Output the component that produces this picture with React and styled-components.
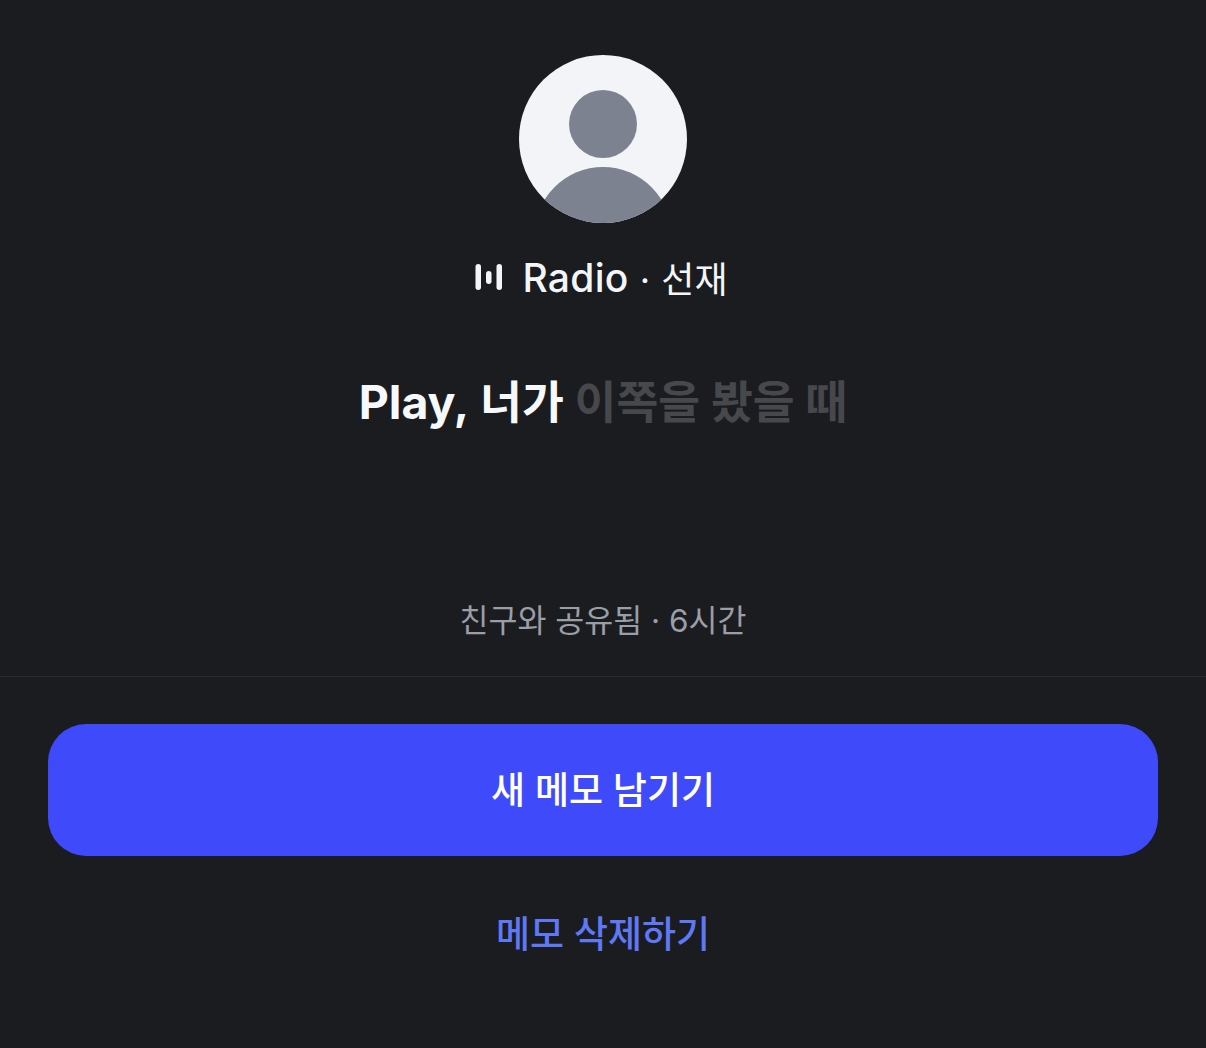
import React from 'react';
import styled, { createGlobalStyle } from 'styled-components';

const Global = createGlobalStyle`
  html, body { margin: 0; padding: 0; background: #1a1c20; }
  body { font-family: Inter, "Noto Sans CJK KR", sans-serif; }
`;
const Page = styled.div`
  width: 1206px; height: 1048px; overflow: hidden; background: #1a1c20;
  display: flex; flex-direction: column; align-items: center;
`;
const Top = styled.div`
  display: flex; flex: none; flex-direction: column; align-items: center; padding-top: 55px; height: 677px; box-sizing: border-box; width: 100%;
  border-bottom: 1px solid #2a2c30;
`;
const Avatar = styled.svg`width: 168px; height: 168px; display: block; flex: none;`;
const Source = styled.div`
  display: flex; flex: none; align-items: center; margin: 31px 3px 0 0; height: 46px; color: #f4f5f7;
  font-size: 36px; font-weight: 400; white-space: pre; word-spacing: 1px;
`;
const Latin = styled.span`font-size: ${p => p.$size}px; font-weight: ${p => p.$weight}; letter-spacing: ${p => p.$spacing || 0}px;`;
const Bars = styled.svg`width: 27px; height: 28px; margin-right: 20px; flex: none;`;
const Title = styled.div`
  flex: none; margin-top: 72px; height: 60px; line-height: 60px; font-size: 45.5px; font-weight: 700; color: #f7f8fa; white-space: nowrap;
`;
const Faded = styled.span`color: #46484c;`;
const Meta = styled.div`
  flex: none; margin-top: 168px; font-size: 31.5px; line-height: 42px; color: #9a9ea6; white-space: nowrap;
`;
const Actions = styled.div`
  display: flex; flex-direction: column; align-items: center; width: 100%; padding-top: 47px;
`;
const Primary = styled.button`
  width: 1110px; height: 132px; border: 0; border-radius: 38px; background: #3f4bfb; color: #fff; padding: 0 0 4px;
  font: 500 37px Inter, "Noto Sans CJK KR", sans-serif;
`;
const Secondary = styled.button`
  margin-top: 46px; height: 60px; border: 0; background: none; color: #5f78f5; padding: 0;
  font: 500 37px Inter, "Noto Sans CJK KR", sans-serif;
`;

export default function App() {
  return (
    <Page>
      <Global />
      <Top>
        <Avatar viewBox="0 0 168 168">
          <defs><clipPath id="c"><circle cx="84" cy="84" r="84" /></clipPath></defs>
          <circle cx="84" cy="84" r="84" fill="#f3f4f7" />
          <circle cx="84" cy="69" r="34" fill="#7c8290" />
          <ellipse cx="84" cy="182" rx="69" ry="70" fill="#7c8290" clipPath="url(#c)" />
        </Avatar>
        <Source>
          <Bars viewBox="0 0 27 28">
            <rect x="0.5" y="1" width="5.5" height="26" rx="2.75" fill="#f4f5f7" />
            <rect x="11" y="8" width="5.5" height="13" rx="2.75" fill="#f4f5f7" />
            <rect x="21.5" y="1" width="5.5" height="26" rx="2.75" fill="#f4f5f7" />
          </Bars>
          <Latin $size={39} $weight={500} $spacing={0.3}>Radio</Latin> · 선재
        </Source>
        <Title><Latin $size={46.5} $weight={700}>Play,</Latin> 너가 <Faded>이쪽을 봤을 때</Faded></Title>
        <Meta>친구와 공유됨 · 6시간</Meta>
      </Top>
      <Actions>
        <Primary>새 메모 남기기</Primary>
        <Secondary>메모 삭제하기</Secondary>
      </Actions>
    </Page>
  );
}
